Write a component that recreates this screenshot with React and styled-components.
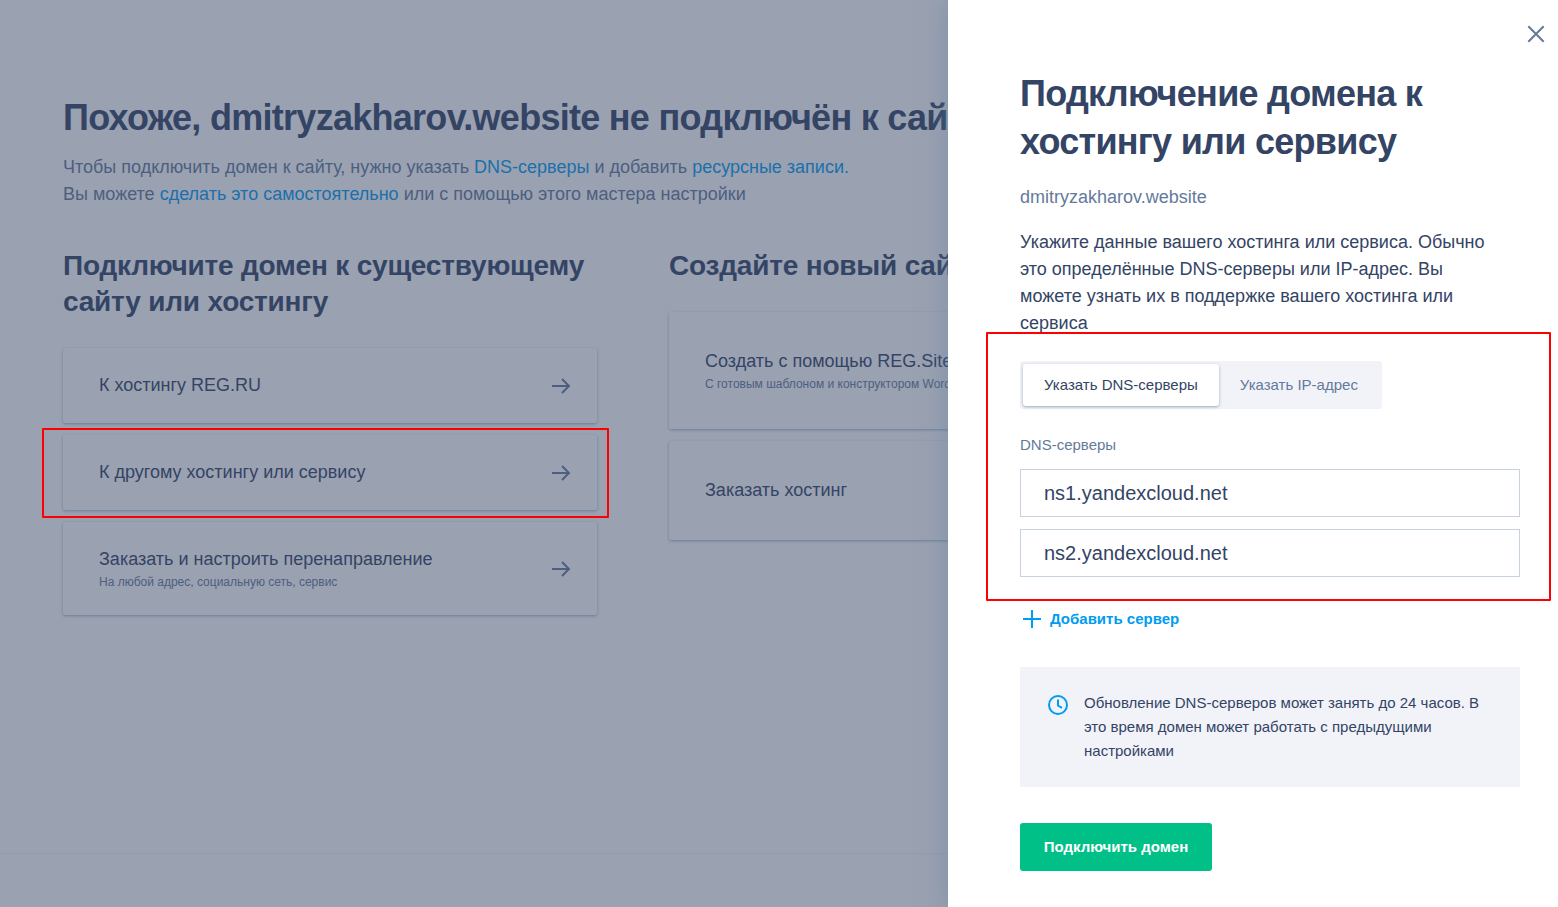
import React from 'react';
import styled, { createGlobalStyle } from 'styled-components';

const c = {
  ink: '#334465',
  muted: '#637a9b',
  link: '#009cf2',
  soft: '#f2f3f9',
  line: '#c8d2de',
  green: '#00c088',
};

const GlobalStyle = createGlobalStyle`
  *, *::before, *::after { box-sizing: border-box; }
  body { margin: 0; font-family: "Liberation Sans", Arial, sans-serif; color: ${c.ink}; }
  h1, h2, p { margin: 0; }
  button, input { font: inherit; color: inherit; border: 0; padding: 0; margin: 0; background: none; }
`;

const Page = styled.div`
  position: relative;
  height: 907px;
  width: 1558px;
  overflow: hidden;
  background: #fff;
`;

const Main = styled.main`
  display: flex;
  flex-direction: column;
  height: 853px;
  padding: 94px 0 0 63px;
`;

const Footer = styled.footer`
  height: 54px;
  border-top: 1px solid ${c.soft};
`;

const Title = styled.h1`
  font-size: 36px;
  line-height: 48px;
  letter-spacing: -0.72px;
  white-space: ${(p) => (p.$wrap ? 'normal' : 'nowrap')};
`;

const Lead = styled.p`
  margin-top: 12px;
  font-size: 18px;
  line-height: 27px;
  color: ${c.muted};
`;

const Link = styled.a`
  color: ${c.link};
`;

const Columns = styled.div`
  display: grid;
  grid-template-columns: 534px 534px;
  column-gap: 72px;
  align-items: start;
  margin-top: 40px;
`;

const Column = styled.section`
  display: flex;
  flex-direction: column;
  gap: 12px;
`;

const Subtitle = styled.h2`
  margin-bottom: 16px;
  font-size: 28px;
  line-height: 36px;
  letter-spacing: -0.2px;
`;

const CardBox = styled.div`
  display: flex;
  align-items: center;
  justify-content: space-between;
  height: ${(p) => p.$height}px;
  padding: 0 24px 0 36px;
  border-radius: 2px;
  background: #fff;
  box-shadow: 0 1px 3px rgba(62, 108, 148, 0.5);
`;

const CardText = styled.div`
  display: flex;
  flex-direction: column;
`;

const CardTitle = styled.span`
  font-size: 18px;
  line-height: 27px;
`;

const CardNote = styled.span`
  font-size: 12px;
  line-height: 18px;
  color: ${c.muted};
`;

const Overlay = styled.div`
  position: absolute;
  inset: 0;
  background: rgba(54, 67, 100, 0.5);
`;

const Panel = styled.aside`
  position: absolute;
  top: 0;
  right: 0;
  bottom: 0;
  display: flex;
  flex-direction: column;
  align-items: flex-start;
  width: 610px;
  padding: 22px 38px 0 72px;
  background: #fff;
  box-shadow: 0 0 24px rgba(92, 128, 158, 0.5);
`;

const CloseButton = styled.button`
  align-self: flex-end;
  display: flex;
  width: 24px;
  height: 24px;
  margin: 0 -28px 24px 0;
  color: ${c.muted};
`;

const Domain = styled.p`
  margin-top: 18px;
  font-size: 18px;
  line-height: 27px;
  color: ${c.muted};
`;

const Description = styled.p`
  width: 480px;
  margin-top: 18px;
  font-size: 18px;
  line-height: 27px;
`;

const Tabs = styled.div`
  display: flex;
  width: 362px;
  height: 48px;
  margin-top: 24px;
  padding: 3px;
  border-radius: 3px;
  background: ${c.soft};
`;

const Tab = styled.button`
  height: 42px;
  padding: 0 21px;
  border-radius: 3px;
  font-size: 15px;
  line-height: 24px;
  padding-bottom: 1px;
  color: ${(p) => (p.$active ? c.ink : c.muted)};
  background: ${(p) => (p.$active ? '#fff' : 'none')};
  box-shadow: ${(p) => (p.$active ? '0 1px 3px rgba(62, 98, 138, 0.5)' : 'none')};
`;

const Label = styled.p`
  margin-top: 24px;
  font-size: 15px;
  line-height: 24px;
  color: ${c.muted};
`;

const Fields = styled.div`
  display: flex;
  flex-direction: column;
  gap: 12px;
  width: 100%;
  margin-top: 12px;
`;

const Field = styled.input`
  width: 100%;
  height: 48px;
  padding: 0 23px;
  border: 1px solid ${c.line};
  font-size: 20px;
`;

const AddButton = styled.button`
  display: flex;
  align-items: center;
  gap: 6px;
  height: 24px;
  margin-top: 30px;
  font-size: 15px;
  line-height: 24px;
  font-weight: 700;
  color: ${c.link};
`;

const Notice = styled.div`
  display: flex;
  gap: 14px;
  width: 100%;
  height: 120px;
  margin-top: 36px;
  padding: 24px 24px 24px 26px;
  background: ${c.soft};
`;

const NoticeText = styled.p`
  flex: 1;
  font-size: 15px;
  line-height: 24px;
`;

const Submit = styled.button`
  width: 192px;
  height: 48px;
  margin-top: 36px;
  border-radius: 3px;
  font-size: 15px;
  line-height: 24px;
  font-weight: 700;
  color: #fff;
  background: ${c.green};
`;

const Highlight = styled.div`
  position: absolute;
  left: ${(p) => p.$x}px;
  top: ${(p) => p.$y}px;
  width: ${(p) => p.$w}px;
  height: ${(p) => p.$h}px;
  border: 2px solid #f00;
  border-radius: 1px;
  pointer-events: none;
`;

const Icon = styled.svg`
  flex: none;
  fill: none;
  stroke: currentColor;
  stroke-width: 2;
  color: ${(p) => p.$color || 'inherit'};
`;

const ArrowIcon = () => (
  <Icon width="24" height="25" viewBox="0 0 24 25" $color={c.muted}>
    <path d="M3 13h17.5M13 6l7 7-7 7" />
  </Icon>
);

const Card = ({ title, note, height, arrow }) => (
  <CardBox $height={height}>
    <CardText>
      <CardTitle>{title}</CardTitle>
      {note && <CardNote>{note}</CardNote>}
    </CardText>
    {arrow && <ArrowIcon />}
  </CardBox>
);

export default function App() {
  return (
    <Page>
      <GlobalStyle />
      <Main>
        <Title>Похоже, dmitryzakharov.website не подключён к сайту</Title>
        <Lead>
          Чтобы подключить домен к сайту, нужно указать <Link>DNS-серверы</Link> и добавить{' '}
          <Link>ресурсные записи.</Link>
          <br />
          Вы можете <Link>сделать это самостоятельно</Link> или с помощью этого мастера настройки
        </Lead>
        <Columns>
          <Column>
            <Subtitle>Подключите домен к существующему сайту или хостингу</Subtitle>
            <Card title="К хостингу REG.RU" height={75} arrow />
            <Card title="К другому хостингу или сервису" height={75} arrow />
            <Card
              title="Заказать и настроить перенаправление"
              note="На любой адрес, социальную сеть, сервис"
              height={93}
              arrow
            />
          </Column>
          <Column>
            <Subtitle>Создайте новый сайт</Subtitle>
            <Card
              title="Создать с помощью REG.Site"
              note="С готовым шаблоном и конструктором WordPress"
              height={117}
            />
            <Card title="Заказать хостинг" height={99} />
          </Column>
        </Columns>
      </Main>
      <Footer />
      <Overlay />
      <Panel>
        <CloseButton aria-label="Закрыть">
          <Icon width="24" height="24" viewBox="0 0 24 24">
            <path d="M4.3 4.3l15.4 15.4M19.7 4.3L4.3 19.7" />
          </Icon>
        </CloseButton>
        <Title $wrap>Подключение домена к хостингу или сервису</Title>
        <Domain>dmitryzakharov.website</Domain>
        <Description>
          Укажите данные вашего хостинга или сервиса. Обычно это определённые DNS-серверы или
          IP-адрес. Вы можете узнать их в поддержке вашего хостинга или сервиса
        </Description>
        <Tabs>
          <Tab $active>Указать DNS-серверы</Tab>
          <Tab>Указать IP-адрес</Tab>
        </Tabs>
        <Label>DNS-серверы</Label>
        <Fields>
          <Field defaultValue="ns1.yandexcloud.net" />
          <Field defaultValue="ns2.yandexcloud.net" />
        </Fields>
        <AddButton>
          <Icon width="24" height="24" viewBox="0 0 24 24">
            <path d="M3 12h18M12 3v18" />
          </Icon>
          Добавить сервер
        </AddButton>
        <Notice>
          <Icon width="24" height="28" viewBox="0 0 24 28" $color={c.link}>
            <circle cx="12" cy="14" r="9" />
            <path d="M12 8.5v6l4 2.3" />
          </Icon>
          <NoticeText>
            Обновление DNS-серверов может занять до 24 часов. В это время домен может работать с
            предыдущими настройками
          </NoticeText>
        </Notice>
        <Submit>Подключить домен</Submit>
      </Panel>
      <Highlight $x={42} $y={428} $w={567} $h={90} />
      <Highlight $x={986} $y={332} $w={565} $h={269} />
    </Page>
  );
}
